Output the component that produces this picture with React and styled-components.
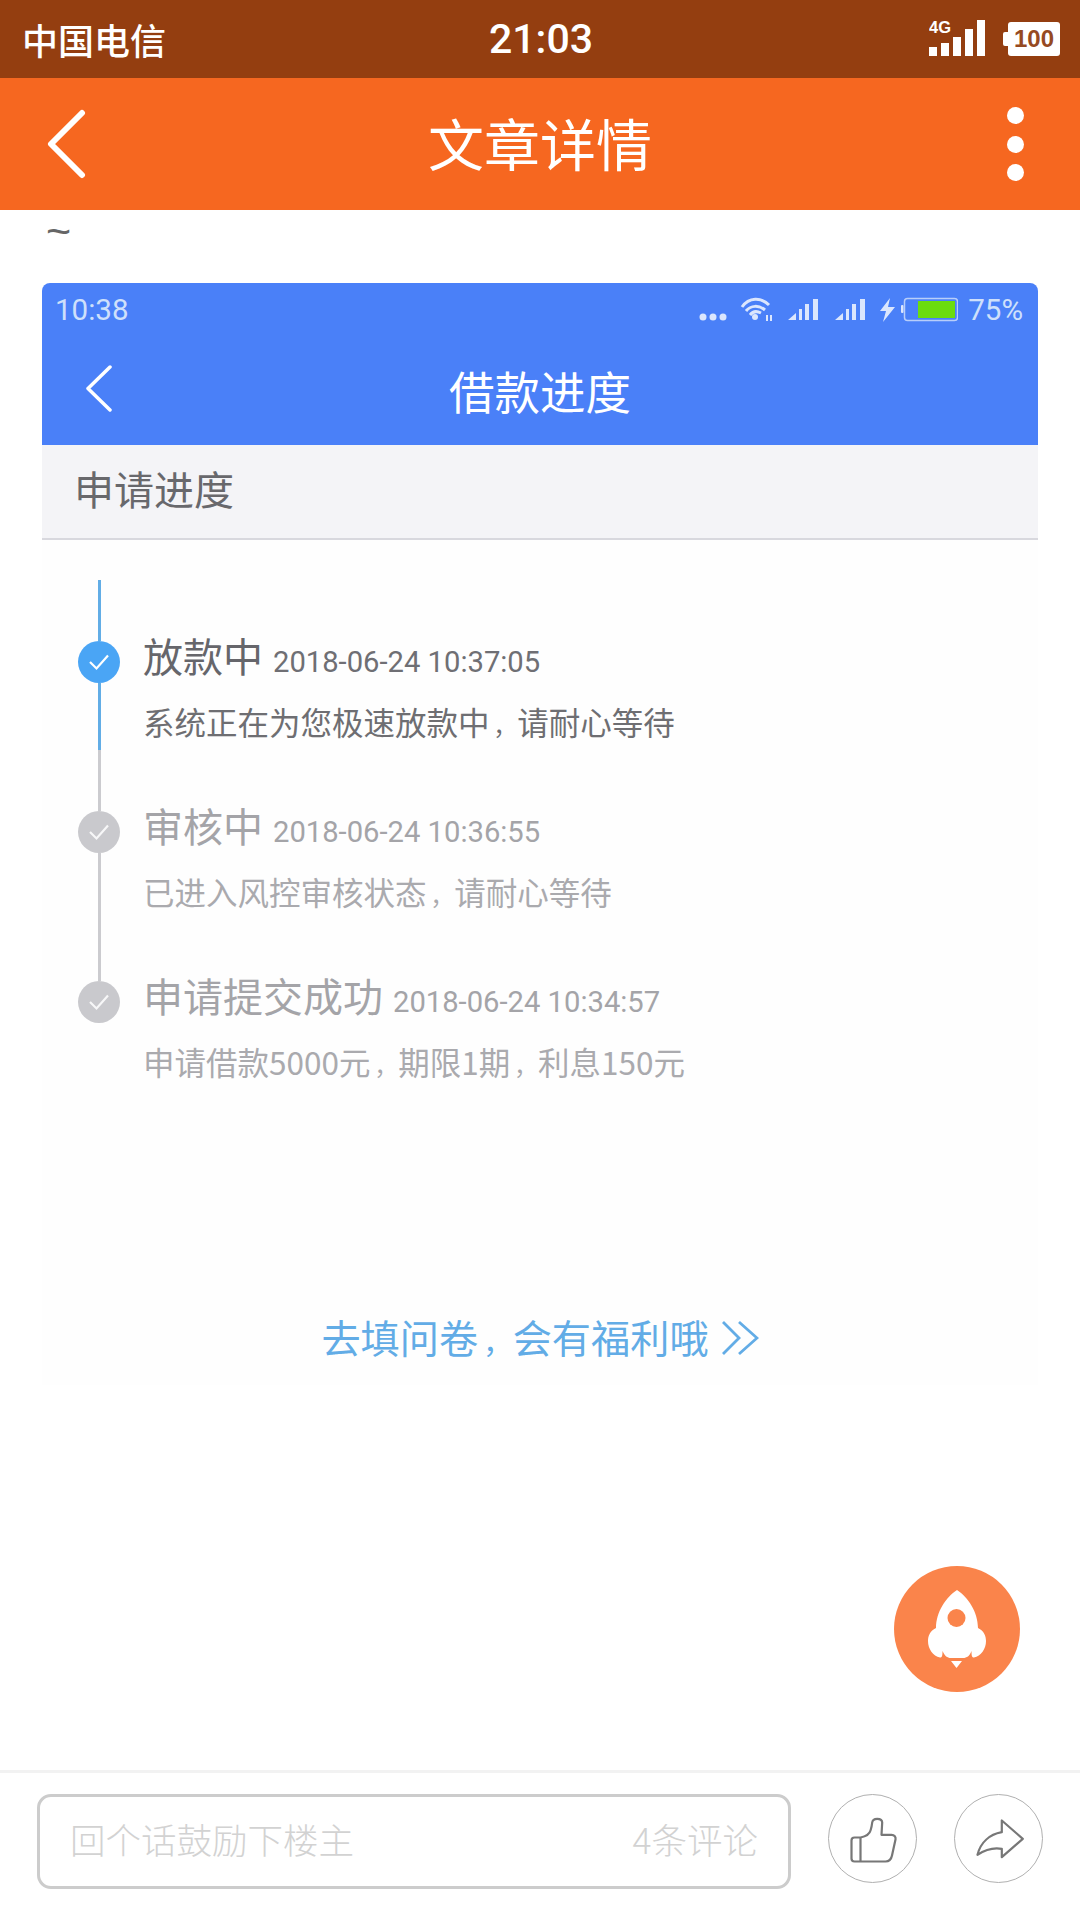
import styled, { createGlobalStyle } from "styled-components";

const cjk = `"Noto Sans CJK SC", "Noto Sans", sans-serif`;
const num = `Roboto, "Noto Sans CJK SC", sans-serif`;

const steps = [
  { title: "放款中", time: "2018-06-24 10:37:05", desc: "系统正在为您极速放款中，请耐心等待", active: true },
  { title: "审核中", time: "2018-06-24 10:36:55", desc: "已进入风控审核状态，请耐心等待" },
  { title: "申请提交成功", time: "2018-06-24 10:34:57", desc: "申请借款5000元，期限1期，利息150元", last: true },
];

// the comma in the picture is narrower than a full CJK slot
const withCommas = (text) =>
  text.split("，").map((part, idx) => (
    <span key={idx}>
      {idx > 0 && <Comma>，</Comma>}
      {part}
    </span>
  ));

const App = () => {
  return (
    <Page>
      <GlobalStyle />
      <StatusBar>
        <Carrier>中国电信</Carrier>
        <Clock>21:03</Clock>
        <StatusRight>
          <svg width="56" height="46" viewBox="0 -4 56 46">
            <text x="0" y="13" fontSize="16.500" fontWeight="700" fill="#fff" fontFamily="Liberation Sans, sans-serif">4G</text>
            <rect x="0" y="27" width="8" height="9" fill="#fff" />
            <rect x="12" y="23" width="8" height="13" fill="#fff" />
            <rect x="24" y="17" width="8" height="19" fill="#fff" />
            <rect x="36" y="9" width="8" height="27" fill="#fff" />
            <rect x="48" y="0" width="8" height="36" fill="#fff" />
          </svg>
          <Battery>100</Battery>
        </StatusRight>
      </StatusBar>

      <NavBar>
        <svg width="40" height="70" viewBox="0 0 40 70">
          <path d="M36 4 L5 35 L36 66" fill="none" stroke="#fff" strokeWidth="6" strokeLinecap="round" strokeLinejoin="round" />
        </svg>
        <NavTitle>文章详情</NavTitle>
        <MoreMenu>
          <MoreDot />
          <MoreDot />
          <MoreDot />
        </MoreMenu>
      </NavBar>

      <Main>
        <Tilde>~</Tilde>
        <Shot>
          <ShotHeader>
            <ShotStatus>
              <ShotClock>10:38</ShotClock>
              <ShotStatusRight>
                <svg width="259" height="26" viewBox="701 296 259 26">
                  <g fill="#dbe6fd">
                    <circle cx="705" cy="316" r="3.500" />
                    <circle cx="715" cy="316" r="3.500" />
                    <circle cx="725" cy="316" r="3.500" />
                    <circle cx="757" cy="316" r="3" />
                    <path d="M768 320 V314 H770 V320 Z M772 314 H774 V320 H772 Z" />
                    <path d="M790 319 L798 312 V319 Z M801 319 V308 H804 V319 Z M807 319 V303 H811 V319 Z M815 319 V298 H820 V319 Z" />
                    <path d="M837 319 L845 312 V319 Z M848 319 V308 H851 V319 Z M854 319 V303 H858 V319 Z M862 319 V298 H867 V319 Z" />
                    <path d="M892 297 L882 310 H888 L885 321 L897 306 H890 Z" />
                    <rect x="903" y="304" width="2.500" height="8" rx="1" />
                  </g>
                  <g fill="none" stroke="#dbe6fd" strokeWidth="3">
                    <path d="M744 306 C751 296 763 296 771 304" />
                    <path d="M748 310 C753 304 761 304 767 309" />
                    <path d="M752 314 C755 310 759 310 763 312" />
                  </g>
                  <rect x="906.500" y="297.500" width="53" height="22" rx="3" fill="none" stroke="#b8cefa" strokeWidth="1.500" />
                  <rect x="920" y="300" width="37" height="17" fill="#6bdc0e" />
                </svg>
                <ShotPercent>75%</ShotPercent>
              </ShotStatusRight>
            </ShotStatus>
            <ShotNav>
              <ShotBack>
                <svg width="26" height="47" viewBox="0 0 26 47">
                  <path d="M24 2 L2 23.500 L24 45" fill="none" stroke="#fff" strokeWidth="3.500" strokeLinecap="round" strokeLinejoin="round" />
                </svg>
              </ShotBack>
              <ShotTitle>借款进度</ShotTitle>
            </ShotNav>
          </ShotHeader>

          <SectionHead>申请进度</SectionHead>

          <Timeline>
            {steps.map((step) => (
              <Step key={step.title} $last={step.last}>
                <Rail>
                  <Segment $active={step.active} $size={61} />
                  <Node $active={step.active}>
                    <svg width="22" height="18" viewBox="0 0 22 18">
                      <path d="M2 9 L8.500 15.500 L20 2.500" fill="none" stroke="#fff" strokeOpacity={step.active ? 1 : 0.85} strokeWidth="2.200" />
                    </svg>
                  </Node>
                  {!step.last && <Segment $active={step.active} $size={67} />}
                </Rail>
                <StepBody>
                  <StepHead>
                    <StepTitle $active={step.active}>{step.title}</StepTitle>
                    <StepTime $active={step.active}>{step.time}</StepTime>
                  </StepHead>
                  <StepDesc $active={step.active}>{withCommas(step.desc)}</StepDesc>
                </StepBody>
              </Step>
            ))}
          </Timeline>

          <SurveyLink>
            <span>{withCommas("去填问卷，会有福利哦")}</span>
            <svg width="38" height="36" viewBox="0 0 38 36">
              <path d="M2 2 L18 18 L2 34 M18 2 L36 18 L18 34" fill="none" stroke="#62ace6" strokeWidth="2.800" />
            </svg>
          </SurveyLink>
        </Shot>

        <RocketButton>
          <svg width="126" height="126" viewBox="0 0 126 126">
            <path
              d="M63 24 C52 31 42 46 42 62 C36 65 34 70 34 75 C34 83 39 90 46 91.500 C48 91.500 48.500 90 48.500 85 C51 90 53 92 57 92 L69 92 C73 92 75.500 90 77.500 85 C77.500 90 78 91.500 80 91.500 C87 90 92 83 92 75 C92 70 90 65 84 62 C84 46 74 31 63 24 Z"
              fill="#fff"
            />
            <circle cx="62.500" cy="52" r="9" fill="#fa844b" />
            <path d="M57 95 H68 L62.500 102 Z" fill="#fff" />
          </svg>
        </RocketButton>
      </Main>

      <BottomBar>
        <CommentBox>
          <Placeholder>回个话鼓励下楼主</Placeholder>
          <Placeholder>4条评论</Placeholder>
        </CommentBox>
        <RoundButton>
          <svg width="86" height="86" viewBox="1.500 1.500 86 86">
            <path
              d="M32 43 C37 42 41 40 42 36 C43 33 43.500 30 43.700 28 C44 25.500 46 24.300 48.700 24.300 C51.500 24.300 53.700 25.500 53.700 28 L53 40.300 H63 C66 40.300 67.500 42.500 67 45 L63.500 61 C62.700 65 60 67 57 67 H26 C24 67 23 66 23 64 V46 C23 44 24 43 26 43 H32 V67"
              fill="none"
              stroke="#777"
              strokeWidth="2.200"
              strokeLinejoin="round"
            />
          </svg>
        </RoundButton>
        <RoundButton>
          <svg width="86" height="86" viewBox="1.500 1.500 86 86">
            <path
              d="M68.300 44.300 L47.300 26 V37.700 C35 40 26 48 23 60.300 C32 54.300 40 53 47.300 54.300 V62.700 Z"
              fill="none"
              stroke="#777"
              strokeWidth="2.200"
              strokeLinejoin="round"
            />
          </svg>
        </RoundButton>
      </BottomBar>
    </Page>
  );
};

const GlobalStyle = createGlobalStyle`
  html, body {
    margin: 0;
    padding: 0;
    background: #fff;
  }
`;

const Page = styled.div`
  display: flex;
  flex-direction: column;
  width: 1080px;
  height: 1920px;
  overflow: hidden;
  background: #fff;
  font-family: ${cjk};
`;

const Comma = styled.span`
  padding-left: 0.16em;
  font-size: 0.76em;
`;

// status bar
const StatusBar = styled.div`
  display: grid;
  grid-template-columns: 1fr auto 1fr;
  align-items: center;
  height: 78px;
  padding: 0 20px 0 22px;
  box-sizing: border-box;
  background: #943e10;
  color: #fff;
`;
const Carrier = styled.div`
  font-size: 36px;
  font-weight: 500;
  line-height: 40px;
`;
const Clock = styled.div`
  font-family: Roboto, "Liberation Sans", sans-serif;
  font-size: 41px;
  font-weight: 500;
  line-height: 46px;
`;
const StatusRight = styled.div`
  display: flex;
  align-items: center;
  justify-content: flex-end;
  gap: 23px;
`;
const Battery = styled.div`
  position: relative;
  display: flex;
  align-items: center;
  justify-content: center;
  width: 52px;
  height: 34px;
  border-radius: 3px;
  background: #fff;
  color: #964a22;
  font-family: "Liberation Sans", sans-serif;
  font-size: 24px;
  font-weight: 700;

  &::before {
    content: "";
    position: absolute;
    left: -5px;
    top: 10px;
    width: 5px;
    height: 14px;
    border-radius: 2px 0 0 2px;
    background: #fff;
  }
`;

// nav bar
const NavBar = styled.div`
  display: grid;
  grid-template-columns: 1fr auto 1fr;
  align-items: center;
  height: 132px;
  padding: 0 46px;
  box-sizing: border-box;
  background: #f66720;
`;
const NavTitle = styled.div`
  margin-top: -5px;
  color: #fff;
  font-size: 56px;
  line-height: 64px;
`;
const MoreMenu = styled.div`
  display: flex;
  flex-direction: column;
  align-items: flex-end;
  gap: 11.5px;
  padding-right: 10px;
`;
const MoreDot = styled.div`
  width: 17px;
  height: 17px;
  border-radius: 50%;
  background: #fff;
`;

// article
const Main = styled.div`
  position: relative;
  flex: 1;
  padding: 0 42px;
`;
const Tilde = styled.div`
  height: 71px;
  padding: 2px 0 0 4px;
  color: #666;
  font-family: "Liberation Sans", sans-serif;
  font-size: 43px;
  line-height: 38px;
`;
const Shot = styled.div`
  padding-bottom: 20px;
  border-radius: 8px 8px 0 0;
  overflow: hidden;
  background: #fefefe;
`;
const ShotHeader = styled.div`
  background: #4a80f8;
`;
const ShotStatus = styled.div`
  display: flex;
  align-items: center;
  justify-content: space-between;
  height: 52px;
  padding: 2px 15px 0 13px;
  box-sizing: border-box;
`;
const ShotClock = styled.div`
  color: #cfe0fb;
  font-family: ${num};
  font-size: 29.5px;
`;
const ShotStatusRight = styled.div`
  display: flex;
  align-items: center;
  gap: 10px;
`;
const ShotPercent = styled.div`
  color: #cfe0fb;
  font-family: ${num};
  font-size: 29.5px;
`;
const ShotNav = styled.div`
  position: relative;
  display: flex;
  align-items: center;
  justify-content: center;
  height: 110px;
`;
const ShotBack = styled.div`
  position: absolute;
  left: 44px;
  top: 30px;
`;
const ShotTitle = styled.div`
  color: #fff;
  font-size: 45.5px;
  line-height: 54px;
`;
const SectionHead = styled.div`
  height: 95px;
  padding-left: 32px;
  box-sizing: border-box;
  border-bottom: 2px solid #d8d8de;
  background: #f4f4f7;
  color: #68686c;
  font-size: 40px;
  line-height: 86px;
`;

// timeline
const Timeline = styled.div`
  padding: 40px 0 0 35px;
`;
const Step = styled.div`
  display: grid;
  grid-template-columns: 44px 1fr;
  column-gap: 22px;
  height: ${(p) => (p.$last ? "auto" : "170px")};
`;
const Rail = styled.div`
  display: flex;
  flex-direction: column;
  align-items: center;
`;
const Segment = styled.div`
  width: 3px;
  height: ${(p) => p.$size}px;
  background: ${(p) => (p.$active ? "#62ade6" : "#cbcbcf")};
`;
const Node = styled.div`
  display: flex;
  align-items: center;
  justify-content: center;
  width: 42px;
  height: 42px;
  border-radius: 50%;
  background: ${(p) => (p.$active ? "#4aa5f5" : "#c9c9cd")};
`;
const StepBody = styled.div`
  padding-top: 52px;
`;
const StepHead = styled.div`
  display: flex;
  align-items: baseline;
  gap: 10px;
`;
const StepTitle = styled.div`
  color: ${(p) => (p.$active ? "#66666b" : "#a4a4a8")};
  font-size: 40px;
  line-height: 46px;
`;
const StepTime = styled.div`
  color: ${(p) => (p.$active ? "#6f6f74" : "#a4a4a8")};
  font-family: ${num};
  font-size: 29.2px;
`;
const StepDesc = styled.div`
  margin-top: 22px;
  color: ${(p) => (p.$active ? "#6e6e72" : "#aaaaae")};
  font-size: 31.5px;
  line-height: 40px;
`;
const SurveyLink = styled.div`
  display: flex;
  align-items: center;
  justify-content: center;
  gap: 12px;
  margin-top: 226px;
  color: #62ace6;
  font-size: 39.2px;
  line-height: 50px;
`;

// floating button
const RocketButton = styled.div`
  position: absolute;
  right: 60px;
  bottom: 78px;
  width: 126px;
  height: 126px;
  border-radius: 50%;
  background: #fa844b;
`;

// bottom bar
const BottomBar = styled.div`
  display: flex;
  align-items: flex-start;
  gap: 37px;
  height: 150px;
  padding: 21px 0 0 37px;
  box-sizing: border-box;
  border-top: 3px solid #f2f2f2;
`;
const CommentBox = styled.div`
  display: flex;
  align-items: center;
  justify-content: space-between;
  width: 754px;
  height: 95px;
  padding: 0 30px 7px;
  box-sizing: border-box;
  border: 3px solid #ccc;
  border-radius: 14px;
`;
const Placeholder = styled.div`
  color: #d2d2d2;
  font-size: 35.5px;
  font-weight: 300;
`;
const RoundButton = styled.div`
  display: flex;
  align-items: center;
  justify-content: center;
  width: 89px;
  height: 89px;
  box-sizing: border-box;
  border: 1.5px solid #b0b0b0;
  border-radius: 50%;
`;

export default App;
